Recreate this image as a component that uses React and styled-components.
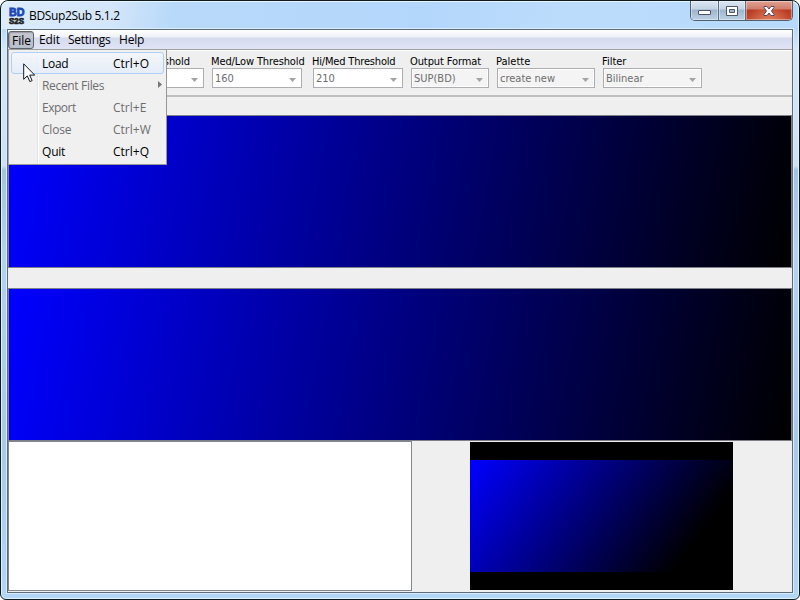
import React from "react";
import styled, { createGlobalStyle, css } from "styled-components";

const Global = createGlobalStyle`
  * { box-sizing: border-box; }
  body { margin: 0; background: #fff; overflow: hidden; }
`;

const Window = styled.div`
  width: 800px;
  height: 600px;
  border: 1px solid #101820;
  border-radius: 8px 8px 6px 6px;
  background: linear-gradient(#b9d7f7 0, #bbd9f7 28px, #d9e7f5 50px, #cfe0f2 165px, #a3c3e2 169px, #b5d2ee 250px, #a9c9e8 450px, #b4d6f7 600px);
  box-shadow: inset 0 0 0 1px #d8f3fc;
  padding: 0 6px 6px;
  display: flex;
  flex-direction: column;
  font-family: "Open Sans", "Noto Sans", sans-serif;
  color: #000;
`;

const TitleBar = styled.header`
  height: 28px;
  flex: none;
  margin: 0 -5px;
  padding-left: 6px;
  display: flex;
  align-items: center;
  border-radius: 7px 7px 0 0;
  border-top: 1px solid #e6f6ff;
  background: linear-gradient(100deg, #dcecfb 0, #d3e6fa 110px, #b8d9f9 170px, #b3d7fb 420px, #bcdcfb 560px, #b7dafb 800px);
`;

const Logo = styled.svg`
  width: 18px;
  height: 18px;
  flex: none;
`;

const Title = styled.h1`
  margin: 0 0 0 3px;
  font-size: 12px;
  font-weight: 400;
  line-height: 18px;
  letter-spacing: ${(p) => p.$spacing}px;
  flex: 1;
`;

const Captions = styled.div`
  align-self: flex-start;
  display: flex;
  height: 20px;
  margin: -1px 5px 0 0;
  border: 1px solid #4f6070;
  border-top: 0;
  border-radius: 0 0 5px 5px;
  overflow: hidden;
`;

const CaptionButton = styled.button`
  width: ${(p) => p.$width}px;
  height: 19px;
  padding: 0;
  border: 0;
  border-right: ${(p) => (p.$close ? "0" : "1px solid #5b6d80")};
  display: flex;
  align-items: center;
  justify-content: center;
  background: ${(p) =>
    p.$close
      ? "radial-gradient(ellipse at 50% 110%, #e3805e 0, rgba(210,80,50,0) 65%), linear-gradient(#dfa293 0, #cf7e6c 8px, #b83a22 9px, #c04a30 18px)"
      : "linear-gradient(#dbe6f1 0, #c4d3e3 8px, #9fb5cb 9px, #b9cee2 18px)"};
  box-shadow: inset 0 0 0 1px rgba(255, 255, 255, 0.4);
`;

const Client = styled.div`
  width: 786px;
  height: 564px;
  border: 1px solid #5d6b7a;
  box-shadow: 0 0 0 1px #d7edfb;
  background: #efefef;
  display: flex;
  flex-direction: column;
  position: relative;
`;

const MenuBar = styled.nav`
  height: 20px;
  flex: none;
  display: flex;
  align-items: center;
  border-bottom: 1px solid #a0a0a0;
  background: linear-gradient(#fff 0, #eff1f8 7px, #d5daed 8px, #e0e4f5 19px);
`;

const MenuTitle = styled.span`
  height: 19px;
  width: ${(p) => p.$width}px;
  padding-left: 4px;
  font-size: 12px;
  line-height: 20px;
  letter-spacing: ${(p) => p.$spacing || 0}px;
  white-space: nowrap;
  ${(p) =>
    p.$open &&
    css`
      height: 18px;
      padding-left: 3px;
      margin-right: 1px;
      line-height: 17px;
      border: 1px solid #5e626b;
      border-radius: 3px;
      background: linear-gradient(#c5c8d0, #b9bfcc);
      box-shadow: inset 1px 1px 1px #999ca5;
    `}
`;

const Toolbar = styled.div`
  height: 47px;
  flex: none;
  padding: 4px 0 0 104px;
  display: flex;
  border-top: 1px solid #fff;
  border-bottom: 2px solid #bebebe;
  font-family: "DejaVu Sans Condensed", "DejaVu Sans", sans-serif;
  font-stretch: condensed;
`;

const Field = styled.label`
  width: ${(p) => p.$width}px;
  margin-right: ${(p) => p.$gap}px;
  flex: none;
  font-size: 11px;
  line-height: 13px;
  letter-spacing: ${(p) => p.$spacing}px;
  white-space: nowrap;
`;

const FieldName = styled.span`
  display: block;
  height: 13px;
  margin-left: -1px;
`;

const Combo = styled.div`
  height: 20px;
  padding: 0 5px 0 2px;
  letter-spacing: 0;
  display: flex;
  align-items: center;
  justify-content: space-between;
  border: 1px solid #adadb2;
  box-shadow: inset 0 0 0 1px #fff;
  background: ${(p) => (p.$editable ? "#fff" : "#f4f4f4")};
  color: #6d6d6d;
`;

const Arrow = styled.svg`
  width: 7px;
  height: 4px;
  margin-top: 3px;
`;

const Screen = styled.div`
  height: 153px;
  flex: none;
  margin-top: ${(p) => p.$top}px;
  border: 1px solid #7e8088;
  background: linear-gradient(101deg, #00f, #000);
`;

const Bottom = styled.div`
  flex: 1;
  display: flex;
  align-items: flex-start;
`;

const Console = styled.div`
  width: 404px;
  height: 150px;
  border: 1px solid #828790;
  background: #fff;
`;

const Preview = styled.div`
  width: 263px;
  height: 148px;
  margin: 1px 0 0 58px;
  padding: 18px 0;
  background: #000;
`;

const PreviewImage = styled.div`
  height: 112px;
  background: linear-gradient(125.5deg, #00f, #000 83%);
`;

const Menu = styled.div`
  position: absolute;
  left: 0;
  top: 20px;
  width: 159px;
  height: 115px;
  padding: 2px 2px 0;
  border: 1px solid #979797;
  border-left-color: #a8a8a8;
  border-top: 0;
  background: linear-gradient(90deg, #f0f0f0 28px, #e2e3e3 28px, #e2e3e3 29px, #fff 29px, #fff 30px, #f0f0f0 30px);
`;

const MenuItem = styled.div`
  height: 22px;
  padding: 2px 0 0 30px;
  display: flex;
  align-items: center;
  border: 1px solid ${(p) => (p.$active ? "#aecff7" : "transparent")};
  border-radius: 3px;
  background: ${(p) => (p.$active ? "linear-gradient(rgba(244,247,252,.8), rgba(228,237,250,.8))" : "none")};
  color: ${(p) => (p.$disabled ? "#6d6d6d" : "#000")};
  font-size: 12px;
  line-height: 20px;
  white-space: nowrap;
`;

const ItemName = styled.span`
  width: 71px;
  letter-spacing: ${(p) => p.$spacing || 0}px;
`;

const Shortcut = styled.span`
  letter-spacing: ${(p) => p.$spacing || 0}px;
`;

const Submenu = styled.svg`
  width: 5px;
  height: 7px;
  margin: -4px 0 0 45px;
`;

const Pointer = styled.svg`
  position: absolute;
  left: 15px;
  top: 33px;
  width: 13px;
  height: 20px;
`;

const fields = [
  { name: "Alpha Threshold", value: "80", width: 92, gap: 8, spacing: -0.07, editable: true },
  { name: "Med/Low Threshold", value: "160", width: 90, gap: 11, spacing: -0.12, editable: true },
  { name: "Hi/Med Threshold", value: "210", width: 90, gap: 8, spacing: -0.18, editable: true },
  { name: "Output Format", value: "SUP(BD)", width: 78, gap: 8, spacing: -0.1 },
  { name: "Palette", value: "create new", width: 98, gap: 8, spacing: 0 },
  { name: "Filter", value: "Bilinear", width: 99, gap: 0, spacing: 0 },
];

const items = [
  { name: "Load", keys: "Ctrl+O", spacing: -0.3, active: true },
  { name: "Recent Files", spacing: -0.33, disabled: true, submenu: true },
  { name: "Export", spacing: -0.5, keys: "Ctrl+E", disabled: true },
  { name: "Close", spacing: -0.2, keys: "Ctrl+W", disabled: true },
  { name: "Quit", spacing: -0.2, keys: "Ctrl+Q" },
];

export default function App() {
  return (
    <Window>
      <Global />
      <TitleBar>
        <Logo viewBox="0 0 18 18" fontFamily="Liberation Sans" fontWeight="700">
          <text x="1" y="9" fontSize="10.5" textLength="15.5" lengthAdjust="spacingAndGlyphs" fill="#1c46b8" stroke="#1c46b8" strokeWidth=".8">BD</text>
          <text x="1" y="17" fontSize="8.5" textLength="15" lengthAdjust="spacingAndGlyphs" fill="#222" stroke="#222" strokeWidth=".7">S2S</text>
        </Logo>
        <Title $spacing={-0.35}>BDSup2Sub 5.1.2</Title>
        <Captions>
          <CaptionButton $width={28} aria-label="Minimize">
            <svg width="13" height="8" viewBox="0 0 13 8"><rect x=".5" y="3.5" width="12" height="4" rx=".5" fill="#fff" stroke="#4d5566" /></svg>
          </CaptionButton>
          <CaptionButton $width={27} aria-label="Maximize">
            <svg width="12" height="10" viewBox="0 0 12 10"><path fillRule="evenodd" d="M.5.5h11v9H.5zM3.500 3.500v3h5v-3z" fill="#fff" stroke="#4d5566" /></svg>
          </CaptionButton>
          <CaptionButton $width={46} $close aria-label="Close">
            <svg width="12" height="10" viewBox="0 0 12 10"><path d="M1 .5h3L6 3 8 .5h3v1L8.5 5 11 8.5v1H8L6 7 4 9.500H1v-1L3.500 5 1 1.500z" fill="#fff" stroke="#59485a" /></svg>
          </CaptionButton>
        </Captions>
      </TitleBar>
      <Client>
        <MenuBar>
          <MenuTitle $width={26} $open>File</MenuTitle>
          <MenuTitle $width={29} $spacing={-0.1}>Edit</MenuTitle>
          <MenuTitle $width={51} $spacing={-0.25}>Settings</MenuTitle>
          <MenuTitle $width={40} $spacing={-0.2}>Help</MenuTitle>
        </MenuBar>
        <Toolbar>
          {fields.map((f) => (
            <Field key={f.name} $width={f.width} $gap={f.gap} $spacing={f.spacing}>
              <FieldName>{f.name}</FieldName>
              <Combo $editable={f.editable}>
                {f.value}
                <Arrow viewBox="0 0 7 4"><path d="M0 0h7L3.500 4z" fill="#a3a3a3" /></Arrow>
              </Combo>
            </Field>
          ))}
        </Toolbar>
        <Screen $top={18} />
        <Screen $top={20} />
        <Bottom>
          <Console />
          <Preview><PreviewImage /></Preview>
        </Bottom>
        <Menu>
          {items.map((i) => (
            <MenuItem key={i.name} $active={i.active} $disabled={i.disabled}>
              <ItemName $spacing={i.spacing}>{i.name}</ItemName>
              {i.submenu ? (
                <Submenu viewBox="0 0 5 7"><path d="M0 0v7l4-3.500z" fill="#777" /></Submenu>
              ) : (
                <Shortcut>{i.keys}</Shortcut>
              )}
            </MenuItem>
          ))}
        </Menu>
        <Pointer viewBox="0 0 13 20">
          <path d="M.7.8v15.500l3.600-3.400 2.500 5.700 2.300-1-2.400-5.500h5z" fill="#fff" stroke="#111827" />
        </Pointer>
      </Client>
    </Window>
  );
}
